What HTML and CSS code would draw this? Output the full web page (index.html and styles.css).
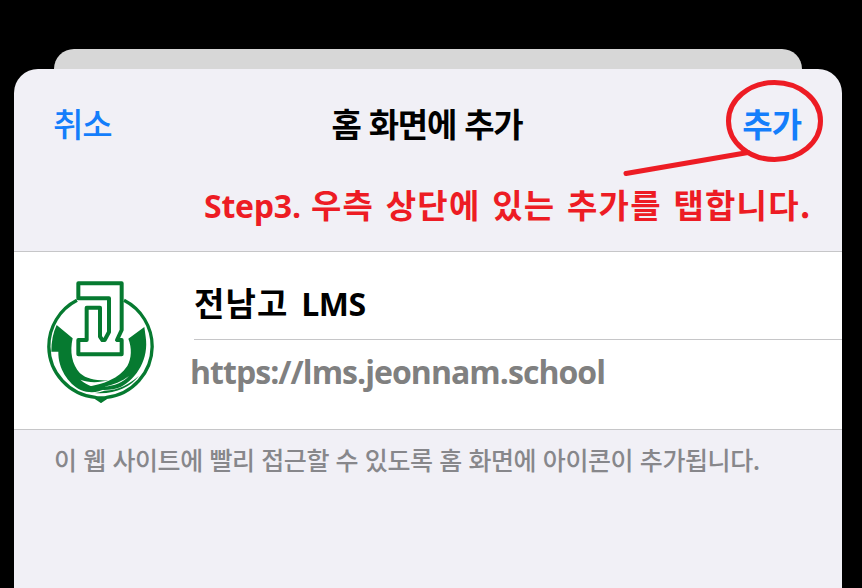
FILE: index.html
```html
<!DOCTYPE html>
<html lang="ko">
<head>
<meta charset="utf-8">
<title>홈 화면에 추가</title>
<link rel="stylesheet" href="styles.css">
</head>
<body>
<div class="back-card"></div>
<main class="sheet">
  <header class="bar">
    <span class="action">취소</span>
    <h1 class="title">홈 화면에 추가</h1>
    <span class="action add">추가</span>
  </header>
  <p class="step"><span class="step-no">Step3.</span> <span class="step-text">우측 상단에 있는 추가를 탭합니다.</span></p>
  <section class="site">
    <svg class="logo" viewBox="0 0 390 420" width="130" height="140">
      <g fill="none" stroke="#067a30" stroke-width="12" stroke-linejoin="round">
        <path stroke-width="10" d="M123 91A155 155 0 0 0 38.500 230A155 155 0 0 0 178 382L195 393L212 382A155 155 0 0 0 348.500 230A155 155 0 0 0 264 91"/>
        <path d="M127 85V40H257V180L243 210H257V253H127V210H152V113H192V200L199 210H206L219 186V85Z"/>
      </g>
      <g fill="#067a30">
        <path d="M62 165L110 205C101 245 107 283 132 310C153 328 179 332 217 331C190 338 157 339 133 329C155 348 180 354 204 357C190 367 160 371 134 360C96 340 66 295 67 245H46C46 216 51 188 62 165Z"/>
        <path d="M325 171L277 206C288 235 287 264 274 288C248 326 205 342 150 351C190 364 228 362 254 351C304 324 339 265 329 200Z"/>
        <path d="M309 317C281 341 248 361 206 362C195 366 185 367 176 369C233 374 283 353 309 317Z"/>
        <path d="M178 379H212L195 399Z"/>
      </g>
      <path d="M205 350C232 345 258 334 279 318C261 337 235 348 205 350Z" fill="#fff"/>
    </svg>
    <div class="fields">
      <div class="name">전남고 <span class="latin">LMS</span></div>
      <div class="url">https://lms.jeonnam.school</div>
    </div>
  </section>
  <p class="note">이 웹 사이트에 빨리 접근할 수 있도록 홈 화면에 아이콘이 추가됩니다.</p>
</main>
<svg class="marker" viewBox="610 70 230 120" width="230" height="120">
  <ellipse cx="774.5" cy="121" rx="46" ry="38.500"/>
  <path d="M626 173.500L748 152.500"/>
</svg>
</body>
</html>
```
FILE: styles.css
```css
* { box-sizing: border-box; }
body {
  margin: 0;
  height: 588px;
  overflow: hidden;
  padding: 49px 20px 0 14px;
  background: #000;
  font-family: "Noto Sans CJK KR", sans-serif;
  position: relative;
}
.back-card {
  height: 20px;
  margin: 0 40px;
  border-radius: 20px 20px 0 0;
  background: #d7d7d7;
}
.sheet {
  height: 519px;
  background: #f1f0f6;
  border-radius: 24px 24px 0 0;
}
.bar {
  height: 110px;
  padding: 0 41px 2px 39px;
  display: grid;
  grid-template-columns: 1fr auto 1fr;
  align-items: center;
}
.action {
  color: #147efb;
  font-size: 33px;
  font-weight: 500;
  letter-spacing: -1px;
  white-space: nowrap;
}
.add { justify-self: end; font-weight: 700; }
.title {
  margin: 0;
  font-size: 33px;
  font-weight: 700;
  letter-spacing: -1.2px;
  white-space: nowrap;
}
.step {
  height: 72px;
  margin: 0;
  padding-left: 190px;
  display: flex;
  align-items: baseline;
  gap: 10px;
  line-height: 50px;
  color: #ed1c24;
  font-size: 33px;
  font-weight: 700;
  white-space: nowrap;
}
.step-no, .latin, .url { font-family: "Open Sans", "Noto Sans", sans-serif; }
.step-no { font-size: 32px; letter-spacing: -.2px; }
.step-text { letter-spacing: 1.2px; word-spacing: 1.3px; }
.site {
  height: 179px;
  padding-left: 22px;
  display: flex;
  align-items: flex-start;
  background: #fff;
  border-top: 1px solid #c6c6c8;
  border-bottom: 1px solid #c6c6c8;
}
.logo { flex: none; margin-top: 18px; }
.fields { flex: 1; padding-left: 28px; white-space: nowrap; }
.name {
  height: 88px;
  border-bottom: 1px solid #c6c6c8;
  line-height: 100px;
  font-size: 33px;
  font-weight: 700;
  letter-spacing: 1.2px;
  word-spacing: 2px;
}
.latin { font-size: 32px; letter-spacing: -.5px; }
.url {
  margin-left: -4px;
  line-height: 63px;
  color: #808080;
  font-size: 32px;
  font-weight: 700;
  letter-spacing: -.96px;
}
.note {
  margin: 0;
  padding-left: 40px;
  line-height: 59px;
  color: #87878b;
  font-size: 25px;
  font-weight: 500;
  letter-spacing: -.4px;
  white-space: nowrap;
}
.marker {
  position: absolute;
  left: 610px;
  top: 70px;
  fill: none;
  stroke: #ed1c24;
  stroke-width: 5;
  stroke-linecap: round;
}
```
